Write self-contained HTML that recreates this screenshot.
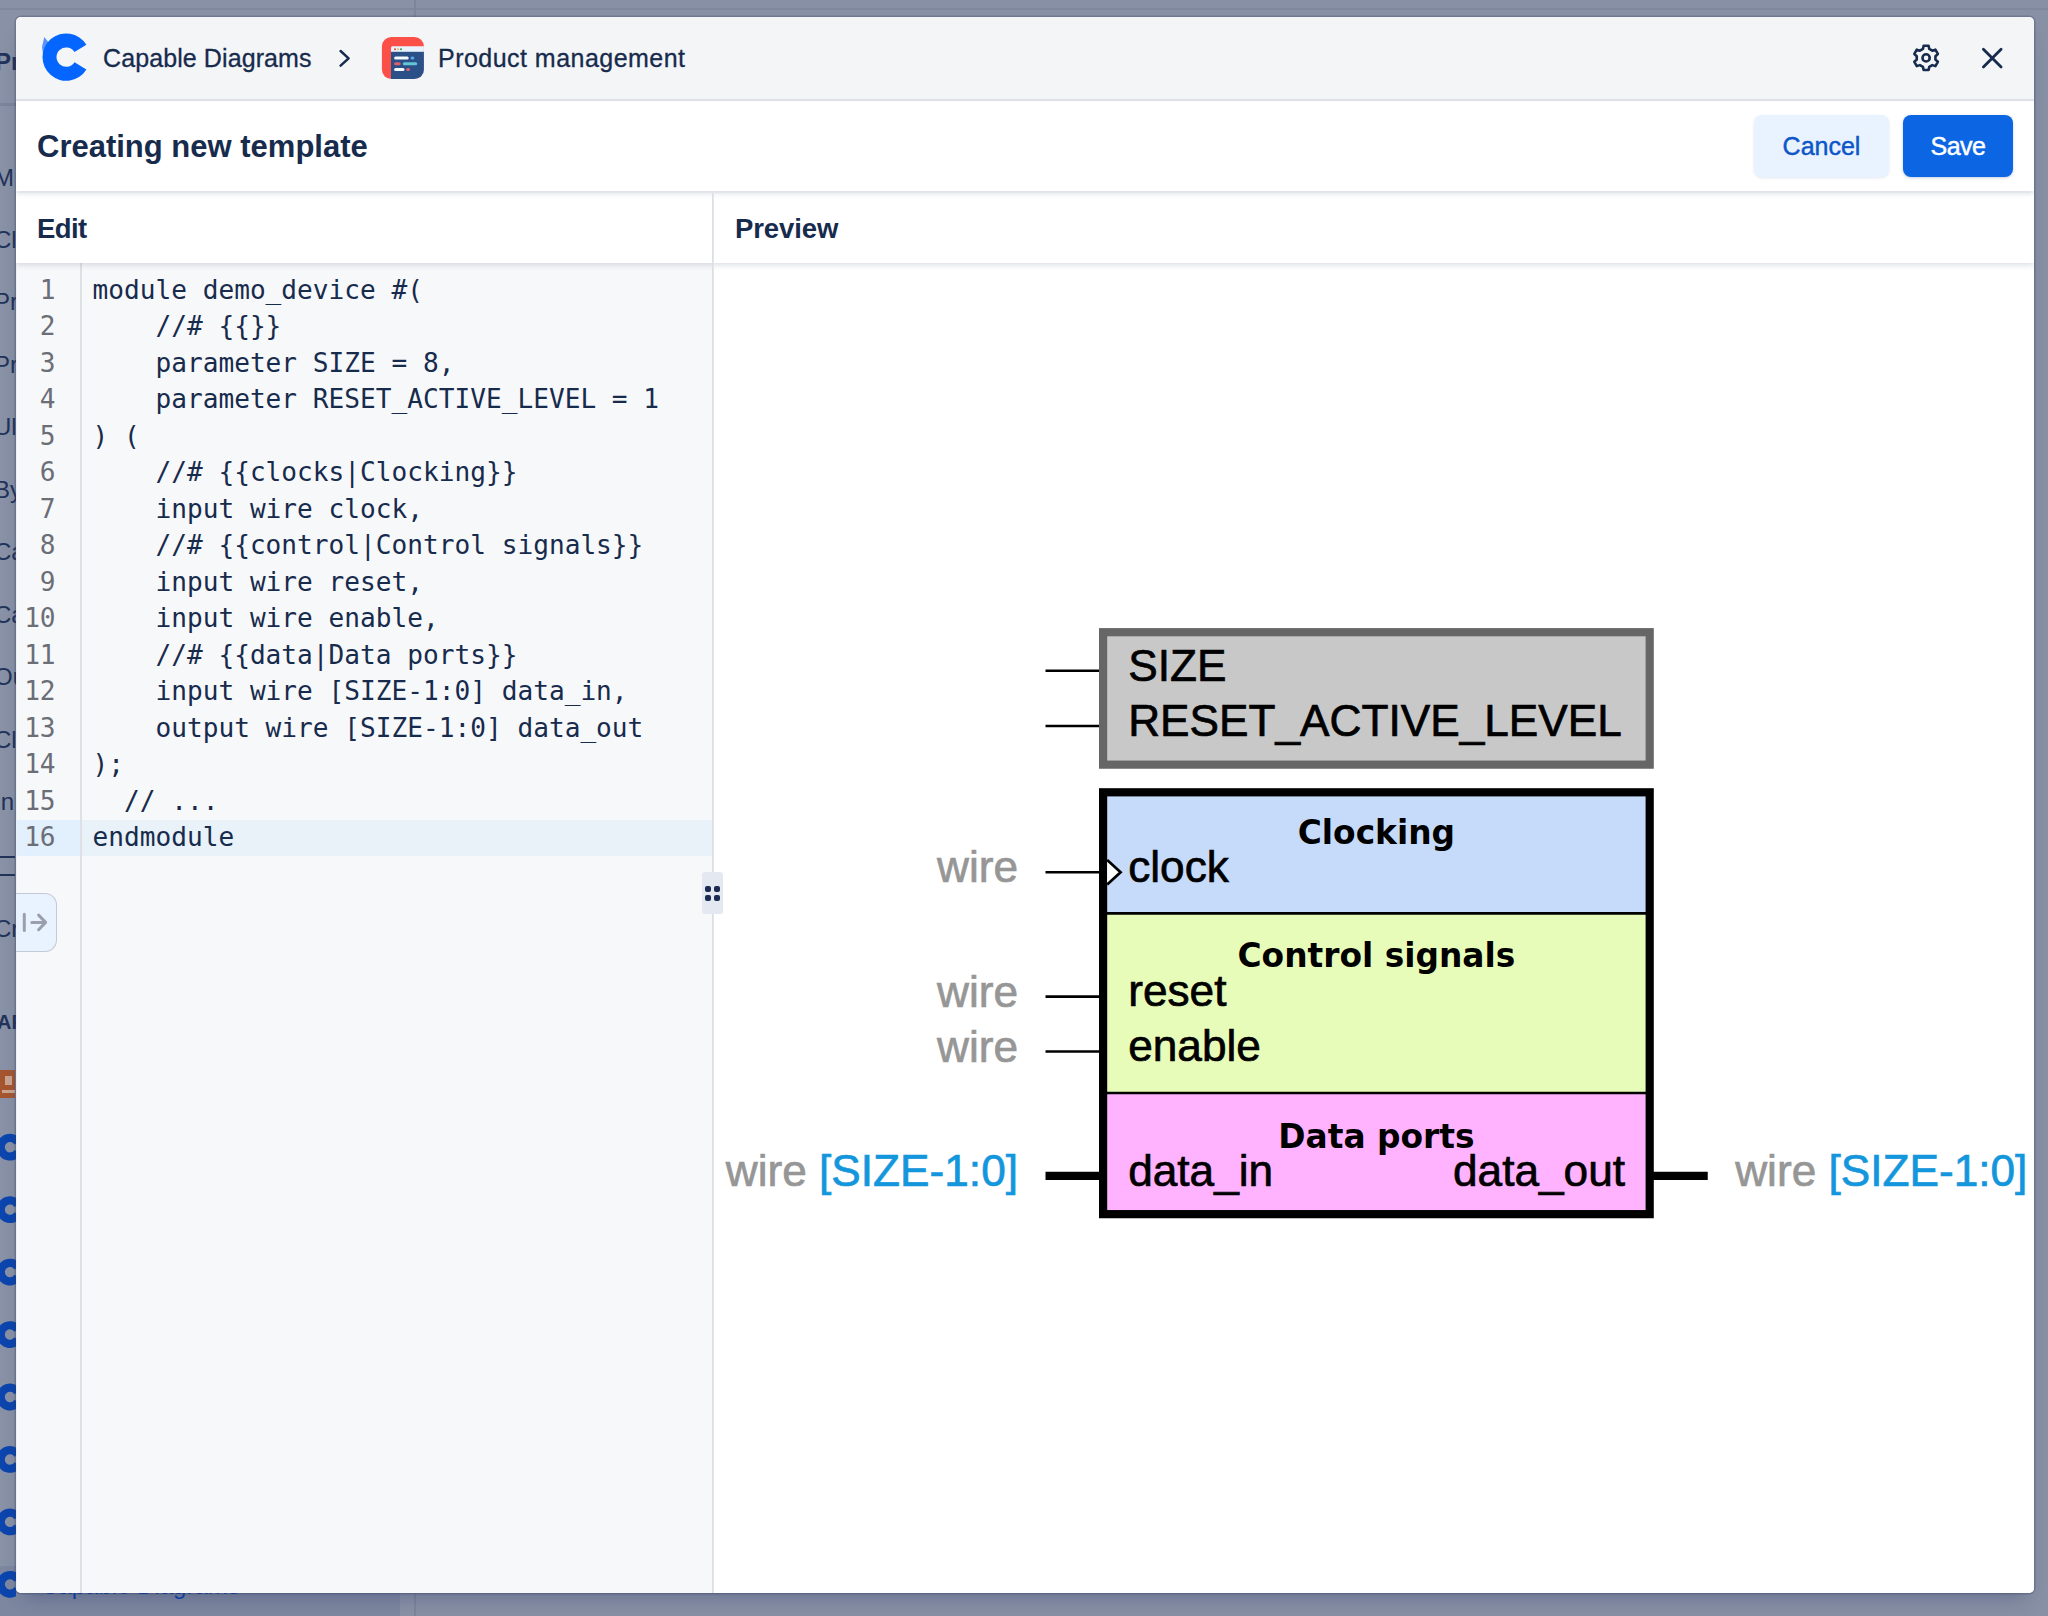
<!DOCTYPE html>
<html lang="en">
<head>
<meta charset="utf-8">
<title>Creating new template</title>
<style>
*{box-sizing:border-box;margin:0;padding:0}
html,body{width:2048px;height:1616px;overflow:hidden}
body{position:relative;background:#8790a4;font-family:"Liberation Sans",sans-serif;color:#172b4d}
.abs{position:absolute}
/* underlying page hints */
#bgside{left:0;top:0;width:415px;height:1616px;background:#8891a5}
#bgtopline{left:0;top:8px;width:2048px;height:2px;background:#7f889c}
#bgvline{left:414px;top:0;width:2px;height:1616px;background:#7c8599}
#bgfoot{left:0;top:1566px;width:400px;height:50px;background:#7d87a0}
.st{left:-14px;font-size:30px;line-height:36px;color:#253858;white-space:nowrap;width:30px;overflow:hidden}
/* modal */
#modal{left:16px;top:17px;width:2018px;height:1576px;background:#fff;border-radius:5px;overflow:hidden;box-shadow:0 12px 18px -8px rgba(30,45,95,.32),0 0 0 1.5px rgba(50,62,95,.28)}
#hdr{left:0;top:0;width:2018px;height:84px;background:#f4f5f7;border-bottom:2px solid #e3e5ea}
#hdr .t{top:24px;-webkit-text-stroke:.3px;font-size:25px;line-height:34px;white-space:nowrap;color:#172b4d}
#titlebar{left:0;top:84px;width:2018px;height:90px;background:#fff;box-shadow:0 2px 6px rgba(70,80,120,.2);z-index:3}
#titlebar h1{position:absolute;left:21px;top:26px;font-size:31px;line-height:40px;font-weight:bold;color:#172b4d;white-space:nowrap}
.btn{top:14px;height:62px;border-radius:8px;font-size:25px;-webkit-text-stroke:.45px;line-height:62px;text-align:center;white-space:nowrap}
#cancel{left:1738px;width:135px;background:#e9f2ff;color:#0c56c8;box-shadow:0 1px 3px rgba(20,60,140,.12)}
#save{left:1887px;width:110px;letter-spacing:-.5px;background:#0c66e4;color:#fff;box-shadow:0 1px 3px rgba(20,60,140,.25)}
#sub{left:0;top:176px;width:2018px;height:70px;background:#fff;box-shadow:0 2px 6px rgba(70,80,120,.2);z-index:2}
#sub .lbl{top:18px;font-size:27.5px;line-height:36px;font-weight:bold;color:#172b4d;white-space:nowrap}
#editor{left:0;top:246px;width:696px;height:1330px;background:#f7f8fa}
#gutter{left:0;top:0;width:66px;height:1330px;border-right:2px solid #dfe0e5;border-left:1px solid #eceef6}
#vdiv{left:696px;top:176px;width:2px;height:1400px;background:linear-gradient(90deg,#dcdee6 0,#dcdee6 55%,#eceef2 100%);z-index:4}
#preview{left:697px;top:246px;width:1321px;height:1330px;background:#fff}
.ln,.cl{position:absolute;font-family:"DejaVu Sans Mono","Liberation Mono",monospace;font-size:26.15px;line-height:36px;white-space:pre;margin-top:.8px}
.ln{left:-1.4px;width:41px;text-align:right;color:#6b6e76}
.cl{left:76.5px;color:#172b4d}
#active{left:0;top:557px;width:696px;height:36px;background:#e9f2f9}
#activeg{left:0;top:557px;width:64px;height:36px;background:#e2effc}
#strip{left:0;top:0;width:16px;height:1616px;overflow:hidden}
.sn,.sb,.sh{left:-6px;white-space:nowrap;color:#22335a;line-height:28px}
.sn{font-size:24px}
.sb{font-size:24px;font-weight:bold;left:-5px}
.sh{font-size:20px;font-weight:bold;left:-3px;line-height:24px}
#handle{left:686px;top:855px;width:21px;height:42px;border-radius:3px;background:#e4e8f1;z-index:5}
#handle i{position:absolute;width:6.2px;height:6.2px;border-radius:2px;background:#1b2b52}
#collapse{left:-1px;top:876px;width:42px;height:59px;background:#e9f2ff;border:1.3px solid #c3c9d6;border-left:none;border-radius:0 12px 12px 0;z-index:5}
</style>
</head>
<body>
<div id="bgside" class="abs"></div>
<div id="bgtopline" class="abs"></div>
<div id="bgvline" class="abs"></div>
<div id="bgfoot" class="abs"></div>
<div class="abs" style="left:0;top:103px;width:16px;height:3px;background:#7b849a"></div>
<div class="abs" style="left:41px;top:1572px;font-size:24px;line-height:28px;color:#0b45ad;white-space:nowrap">Capable Diagrams</div>
<!--STRIP--><div id="strip" class="abs">
<div class="sb abs" style="top:48px">Pr</div>
<div class="sn abs" style="top:163.5px">M</div>
<div class="sn abs" style="top:225.5px">Cl</div>
<div class="sn abs" style="top:288px">Pr</div>
<div class="sn abs" style="top:350.5px">Pr</div>
<div class="sn abs" style="top:413px">Ul</div>
<div class="sn abs" style="top:475.5px">By</div>
<div class="sn abs" style="top:538px">Ca</div>
<div class="sn abs" style="top:600.5px">Ca</div>
<div class="sn abs" style="top:663px">Ou</div>
<div class="sn abs" style="top:725.5px">Cl</div>
<div class="sn abs" style="top:788px">In</div>
<div class="sn abs" style="top:915px">Cr</div>
<div class="sh abs" style="top:1010px">AP</div>
<div class="abs" style="left:0;top:856px;width:15px;height:2px;background:#22335a"></div><div class="abs" style="left:0;top:874px;width:15px;height:2px;background:#22335a"></div>
<div class="abs" style="left:0;top:1070px;width:15px;height:28px;background:#a5562f"></div><div class="abs" style="left:5px;top:1076px;width:7px;height:9px;background:#c9a48f"></div><div class="abs" style="left:2px;top:1090px;width:13px;height:3px;background:#c9a48f"></div>
<svg class="abs" style="left:0;top:0" width="16" height="1616" viewBox="0 0 16 1616"><path d="M21.43 1140.20A13.4 13.4 0 1 0 21.43 1154.20L14.43 1149.92A5.2 5.2 0 1 1 14.43 1144.48Z" fill="#0b45ad"/><path d="M21.43 1202.65A13.4 13.4 0 1 0 21.43 1216.65L14.43 1212.37A5.2 5.2 0 1 1 14.43 1206.93Z" fill="#0b45ad"/><path d="M21.43 1265.10A13.4 13.4 0 1 0 21.43 1279.10L14.43 1274.82A5.2 5.2 0 1 1 14.43 1269.38Z" fill="#0b45ad"/><path d="M21.43 1327.55A13.4 13.4 0 1 0 21.43 1341.55L14.43 1337.27A5.2 5.2 0 1 1 14.43 1331.83Z" fill="#0b45ad"/><path d="M21.43 1390.00A13.4 13.4 0 1 0 21.43 1404.00L14.43 1399.72A5.2 5.2 0 1 1 14.43 1394.28Z" fill="#0b45ad"/><path d="M21.43 1452.45A13.4 13.4 0 1 0 21.43 1466.45L14.43 1462.17A5.2 5.2 0 1 1 14.43 1456.73Z" fill="#0b45ad"/><path d="M21.43 1514.90A13.4 13.4 0 1 0 21.43 1528.90L14.43 1524.62A5.2 5.2 0 1 1 14.43 1519.18Z" fill="#0b45ad"/><path d="M21.43 1577.35A13.4 13.4 0 1 0 21.43 1591.35L14.43 1587.07A5.2 5.2 0 1 1 14.43 1581.63Z" fill="#0b45ad"/></svg>
</div><!--/STRIP-->
<div id="modal" class="abs">
  <div id="hdr" class="abs">
    <!--HDR--><svg class="abs" style="left:0;top:0" width="2018" height="84" viewBox="16 17 2018 84">
<path d="M44.3 36.9L49.5 43.5L43.6 58L42 47Z" fill="#5a93f8"/>
<path d="M86.41 44.72A23.7 23.7 0 1 0 86.41 69.48L74.47 62.17A9.7 9.7 0 1 1 74.47 52.03Z" fill="#0565ff"/>
<path d="M340.6 51L348.6 58.3L340.6 65.6" fill="none" stroke="#172b4d" stroke-width="2.5" stroke-linecap="round" stroke-linejoin="round"/>
<clipPath id="pmclip"><rect x="381.9" y="36.9" width="42" height="42.1" rx="9.5"/></clipPath>
<g clip-path="url(#pmclip)">
<rect x="381" y="36" width="44" height="44" fill="#fb4f48"/>
<rect x="391" y="46.3" width="40" height="40" rx="1.5" fill="#eaf2fd"/>
<rect x="391" y="51.8" width="40" height="30" fill="#2b5088"/>
<circle cx="395" cy="49.2" r="1.05" fill="#e5484d"/><circle cx="398" cy="49.2" r="1.05" fill="#eab54f"/><circle cx="401" cy="49.2" r="1.05" fill="#2da44e"/>
<rect x="394.1" y="56.6" width="14.6" height="3" rx="1.5" fill="#f4f8ff"/><rect x="410.6" y="56.6" width="3.7" height="3" rx="1.5" fill="#5aa7ea"/>
<rect x="394.1" y="62.2" width="6.6" height="3" rx="1.5" fill="#dc5f69"/><rect x="402.8" y="62.2" width="14.4" height="3" rx="1.5" fill="#62c6d4"/>
<rect x="394.1" y="68" width="10.4" height="3" rx="1.5" fill="#f4f8ff"/><rect x="406.2" y="68" width="3.8" height="3" rx="1.5" fill="#d9626d"/>
</g>
<path d="M1922.93 48.94L1923.63 45.75L1928.57 45.75L1929.27 48.94L1932.27 50.68L1935.39 49.68L1937.86 53.97L1935.44 56.17L1935.44 59.63L1937.86 61.83L1935.39 66.12L1932.27 65.12L1929.27 66.86L1928.57 70.05L1923.63 70.05L1922.93 66.86L1919.93 65.12L1916.81 66.12L1914.34 61.83L1916.76 59.63L1916.76 56.17L1914.34 53.97L1916.81 49.68L1919.93 50.68Z" fill="none" stroke="#172b4d" stroke-width="2.6" stroke-linejoin="round"/>
<circle cx="1926.1" cy="57.9" r="3.6" fill="none" stroke="#172b4d" stroke-width="2.6"/>
<path d="M1983.4 49.2L2001.1 66.9M2001.1 49.2L1983.4 66.9" fill="none" stroke="#172b4d" stroke-width="2.8" stroke-linecap="round"/>
</svg><!--/HDR-->
    <div class="t abs" style="left:87px;letter-spacing:.1px">Capable Diagrams</div>
    <div class="t abs" style="left:422px;letter-spacing:.47px">Product management</div>
  </div>
  <div id="titlebar" class="abs">
    <h1>Creating new template</h1>
    <div id="cancel" class="btn abs">Cancel</div>
    <div id="save" class="btn abs">Save</div>
  </div>
  <div id="sub" class="abs">
    <div class="lbl abs" style="left:21px;letter-spacing:-.6px">Edit</div>
    <div class="lbl abs" style="left:719px;letter-spacing:-.1px">Preview</div>
  </div>
  <div id="editor" class="abs">
    <div id="active" class="abs"></div>
    <div id="activeg" class="abs"></div>
    <div id="gutter" class="abs"></div>
    <div id="code">
<div class="ln" style="top:8px">1</div><div class="cl" style="top:8px">module demo_device #(</div>
<div class="ln" style="top:44.5px">2</div><div class="cl" style="top:44.5px">    //# {{}}</div>
<div class="ln" style="top:81px">3</div><div class="cl" style="top:81px">    parameter SIZE = 8,</div>
<div class="ln" style="top:117.5px">4</div><div class="cl" style="top:117.5px">    parameter RESET_ACTIVE_LEVEL = 1</div>
<div class="ln" style="top:154px">5</div><div class="cl" style="top:154px">) (</div>
<div class="ln" style="top:190.5px">6</div><div class="cl" style="top:190.5px">    //# {{clocks|Clocking}}</div>
<div class="ln" style="top:227px">7</div><div class="cl" style="top:227px">    input wire clock,</div>
<div class="ln" style="top:263.5px">8</div><div class="cl" style="top:263.5px">    //# {{control|Control signals}}</div>
<div class="ln" style="top:300px">9</div><div class="cl" style="top:300px">    input wire reset,</div>
<div class="ln" style="top:336.5px">10</div><div class="cl" style="top:336.5px">    input wire enable,</div>
<div class="ln" style="top:373px">11</div><div class="cl" style="top:373px">    //# {{data|Data ports}}</div>
<div class="ln" style="top:409.5px">12</div><div class="cl" style="top:409.5px">    input wire [SIZE-1:0] data_in,</div>
<div class="ln" style="top:446px">13</div><div class="cl" style="top:446px">    output wire [SIZE-1:0] data_out</div>
<div class="ln" style="top:482.5px">14</div><div class="cl" style="top:482.5px">);</div>
<div class="ln" style="top:519px">15</div><div class="cl" style="top:519px">  // ...</div>
<div class="ln" style="top:555.5px">16</div><div class="cl" style="top:555.5px">endmodule</div>
</div>
  </div>
  <div id="vdiv" class="abs"></div>
  <div id="handle" class="abs"><i style="left:2.8px;top:13.8px"></i><i style="left:11.6px;top:13.8px"></i><i style="left:2.8px;top:22.7px"></i><i style="left:11.6px;top:22.7px"></i></div>
  <div id="collapse" class="abs"><svg class="abs" style="left:1px;top:-1px" width="42" height="59" viewBox="16 893.5 42 59"><path d="M24.3 914.8V931M31.8 922.9H45M38.6 915.6L45.6 922.9L38.6 930.2" fill="none" stroke="#9a9fab" stroke-width="3" stroke-linecap="round" stroke-linejoin="round"/></svg></div>
  <div id="preview" class="abs"><!--SVG--><svg class="abs" style="left:0;top:0" width="1321" height="1330" viewBox="713 263 1321 1330" font-family="'Liberation Sans',sans-serif">
<g stroke="#000" stroke-width="2.72" fill="none">
<line x1="1045.5" y1="670.75" x2="1100" y2="670.75"/>
<line x1="1045.5" y1="726" x2="1100" y2="726"/>
<line x1="1045.5" y1="872.25" x2="1100" y2="872.25"/>
<line x1="1045.5" y1="996.6" x2="1100" y2="996.6"/>
<line x1="1045.5" y1="1051.5" x2="1100" y2="1051.5"/>
<line x1="1045.5" y1="1175.8" x2="1100" y2="1175.8" stroke-width="8.2"/>
<line x1="1652" y1="1175.8" x2="1707.75" y2="1175.8" stroke-width="8.2"/>
</g>
<rect x="1103.1" y="632.2" width="546.6" height="132.45" fill="#c8c8c8" stroke="#666" stroke-width="8.2"/>
<rect x="1107" y="796" width="539" height="117.3" fill="#c6dbf9"/>
<rect x="1107" y="913.3" width="539" height="179.7" fill="#e8fcb9"/>
<rect x="1107" y="1093" width="539" height="117.5" fill="#ffb3ff"/>
<g stroke="#000" stroke-width="2.72">
<line x1="1107" y1="913.3" x2="1646" y2="913.3"/>
<line x1="1107" y1="1093" x2="1646" y2="1093"/>
</g>
<rect x="1103.1" y="792.3" width="546.6" height="421.85" fill="none" stroke="#000" stroke-width="8.2"/>
<path d="M1107.2 860 L1120.6 872.25 L1107.2 884.5" fill="#fff" stroke="#000" stroke-width="2.72" stroke-linejoin="miter"/>
<g font-size="44.2" fill="#000" stroke="#000" stroke-width="0.7">
<text x="1128.2" y="681">SIZE</text>
<text x="1128.2" y="736.25">RESET_ACTIVE_LEVEL</text>
<text x="1128.2" y="882">clock</text>
<text x="1128.2" y="1006.25">reset</text>
<text x="1128.2" y="1061.25">enable</text>
<text x="1128.2" y="1185.75">data_in</text>
<text x="1625" y="1185.75" text-anchor="end">data_out</text>
</g>
<g font-family="'DejaVu Sans',sans-serif" font-weight="bold" font-size="32.85" fill="#000" text-anchor="middle">
<text x="1376.4" y="843.75">Clocking</text>
<text x="1376.4" y="967">Control signals</text>
<text x="1376.4" y="1147.5">Data ports</text>
</g>
<g font-size="44.2" fill="#969696" text-anchor="end" stroke-width="0.7" stroke="#969696">
<text x="1018" y="882.3">wire</text>
<text x="1018" y="1006.6">wire</text>
<text x="1018" y="1061.6">wire</text>
<text x="1018" y="1186">wire <tspan fill="#1496dc" stroke="#1496dc">[SIZE-1:0]</tspan></text>
</g>
<text x="1735.2" y="1186" font-size="44.2" fill="#969696" stroke="#969696" stroke-width="0.7">wire <tspan fill="#1496dc" stroke="#1496dc">[SIZE-1:0]</tspan></text>
</svg><!--/SVG--></div>
</div>
</body>
</html>
